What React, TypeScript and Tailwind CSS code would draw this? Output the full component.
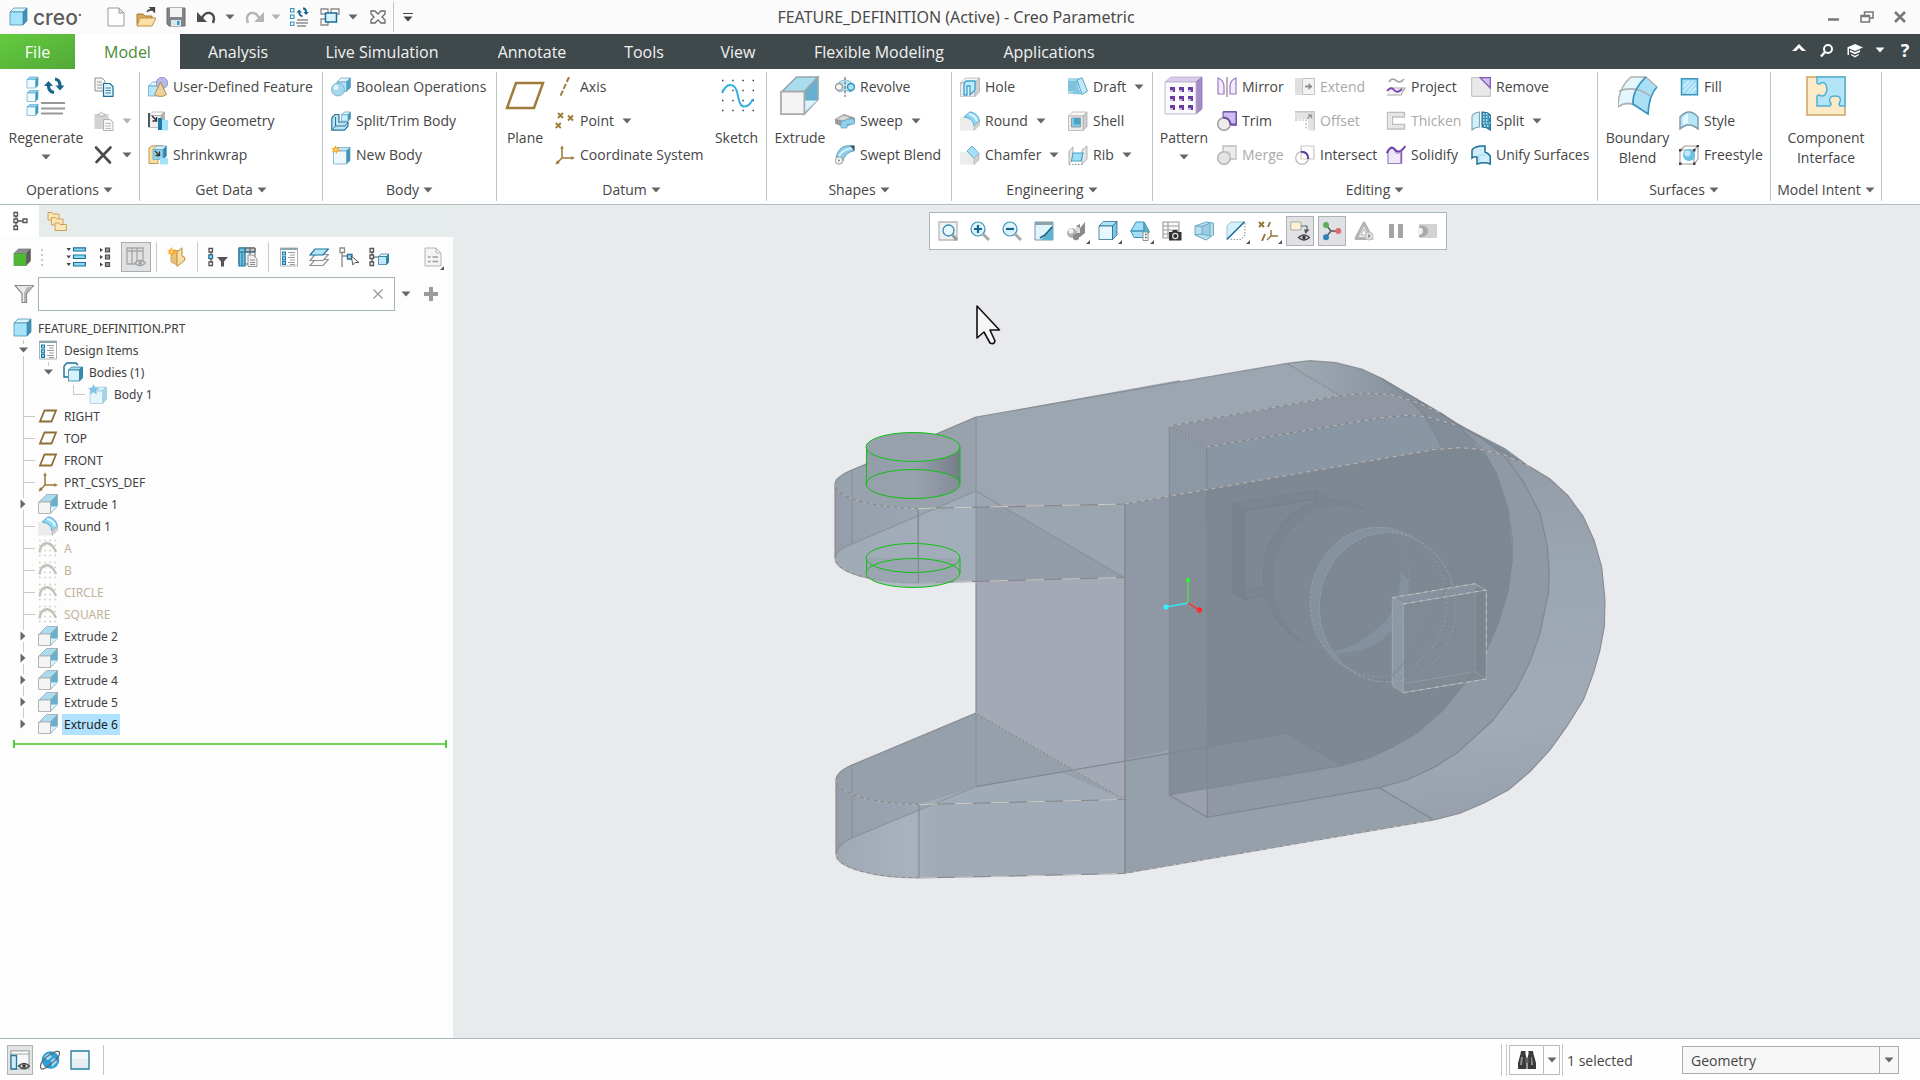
import React from 'react';
import type { ReactNode } from 'react';

/* ---------- small icons (20 x 20 grid) ---------- */

const cube = (x: number, y: number, s: number, k: number, front = '#b5e6fa', top = '#e4f6fd', side = '#4aa3c8', edge = '#5b9fbd') => (
  <g stroke={edge} strokeWidth=".7" strokeLinejoin="round">
    <path d={`M${x} ${y + k}l${k} ${-k}h${s}l${-k} ${k}z`} fill={top} />
    <path d={`M${x + s} ${y + k}l${k} ${-k}v${s}l${-k} ${k}z`} fill={side} />
    <path d={`M${x} ${y + k}h${s}v${s}h${-s}z`} fill={front} />
  </g>
);

const extrude = (
  <>
    <path d="M1 8 8.500 .5H19.500L12.500 8Z" fill="#a9dcef" stroke="#9aa7ad" strokeWidth=".8" />
    <path d="M12.500 8 19.500 .5V12L12.500 19.500Z" fill="#67b1d0" stroke="#9aa7ad" strokeWidth=".8" />
    <path d="M12.800 18.500V12.500H19Z" fill="#d9f4fc" />
    <path d="M.5 8H12.500V19.500H.5Z" fill="#f4f4f4" stroke="#aaa" strokeWidth=".9" />
  </>
);

const round = (
  <>
    <path d="M0 6H7Q13 8 14 19.500H0Z" fill="#ececec" />
    <path d="M4 6 10 .8Q18 2 19.500 10L14 15Q13 7 4 6Z" fill="#8fd8f5" stroke="#3b9cc4" strokeWidth=".8" />
    <path d="M9 3Q15 4 17 10" fill="none" stroke="#e0f7ff" strokeWidth="2" />
    <path d="M14 15 19.500 10V14L14 19.500Z" fill="#d2d2d2" stroke="#aaa" strokeWidth=".6" />
  </>
);

const loop = (
  <g fill="#17678c">
    <path d="M0 9H9L4.500 4Z" />
    <path d="M11.500 8.500H20.500L16 13.500Z" />
    <path d="M4.500 8.500C4.500 12.500 6.500 15 10 15.500" fill="none" stroke="#17678c" strokeWidth="3.200" />
    <path d="M11 2C14.500 2.500 16 5 16 9" fill="none" stroke="#17678c" strokeWidth="3.200" />
  </g>
);

const designItems = (
  <>
    <path d="M1.500 1H18.500V19H1.500Z" fill="#fff" stroke="#a8b4b8" />
    <path d="M1.500 1H18.500V3H1.500Z" fill="#8fa5ae" />
    <g fill="#9fdcf6" stroke="#1a7aa8" strokeWidth="1.100">
      <path d="M3.500 5H6.500V8H3.500ZM3.500 9.700H6.500V12.700H3.500ZM3.500 14.400H6.500V17.400H3.500Z" />
    </g>
    <path d="M9 5.500H16M11 8H16M9 10.500H16M11 13H16M9 15.500H16M11 17.500H16" stroke="#9a9a9a" />
  </>
);

const nodes = (x: number) => (
  <g fill="#fff" stroke="#555" strokeWidth="1.300">
    <path d={`M${x + 2} 5V7.500M${x + 2} 12V15`} />
    <path d={`M${x} 1.500h3.500v3.500h-3.500zM${x} 8h3.500v3.500h-3.500zM${x} 15h3.500v3.500h-3.500z`} />
  </g>
);

const spark = (
  <>
    <path d="M4.500 0 5.600 3 8.500 2 7.400 4.500 9.500 6 6.500 6.500 5.500 9 4 6.500 .8 7.500 2.300 5 0 3.500 3 3Z" fill="#f9a51f" />
    <circle cx="4.700" cy="4.700" r="1.300" fill="#ffe08a" />
  </>
);

const ICONS: Record<string, ReactNode> = {
  part: cube(1, 1, 13, 4, '#a5e3fb', '#d7f3fd', '#3f93b8', '#3c86a8'),
  newFile: (
    <>
      <path d="M2 1H13L18 6V19H2Z" fill="#fdfdfd" stroke="#9b9b9b" />
      <path d="M13 1V6H18Z" fill="#e3e3e3" stroke="#9b9b9b" />
    </>
  ),
  open: (
    <>
      <path d="M1 7H7L9 9H16V18H1Z" fill="#d7a95a" stroke="#a57b30" />
      <path d="M4 11H20L16 19H1Z" fill="#fbdfa4" stroke="#c2924a" />
      <path d="M11 5Q12 2 16 3M14 .5H18.500V5Z" stroke="#444" strokeWidth="1.300" fill="#444" />
    </>
  ),
  save: (
    <>
      <path d="M1 1H19V19H3L1 17Z" fill="#848484" stroke="#6d6d6d" />
      <path d="M4 1H16V10H4Z" fill="#f4f4f4" />
      <path d="M5 13H15V19H5Z" fill="#d9e8ee" />
      <path d="M11 14H13.500V18H11Z" fill="#2f9cc4" />
    </>
  ),
  undo: (
    <>
      <path d="M5 11Q8 5 13 6Q19 8 16 16" fill="none" stroke="#4b4b4b" strokeWidth="2.400" />
      <path d="M0 5V15H10Z" fill="#4b4b4b" />
    </>
  ),
  redo: (
    <>
      <path d="M15 11Q12 5 7 6Q1 8 4 16" fill="none" stroke="#b5b5b5" strokeWidth="2.400" />
      <path d="M20 5V15H10Z" fill="#b5b5b5" />
    </>
  ),
  regen: (
    <>
      <g fill="#e8f8fe" stroke="#3e93b5" strokeWidth="1.100">
        <path d="M1.500 1.500H5V5H1.500ZM1.500 8H5V11.500H1.500ZM1.500 15H5V18.500H1.500Z" />
      </g>
      <g transform="translate(7.500 0) scale(.6)">{loop}</g>
      <path d="M8 13H19M7 16H19M8 19H17" stroke="#8d8d8d" strokeWidth="1.400" />
    </>
  ),
  windows: (
    <>
      <path d="M1 2H8V7H1ZM11 2H19V7H11ZM1 12H8V18H1Z" fill="#fff" stroke="#8b8b8b" strokeWidth="1.300" />
      <path d="M5.500 6H16.500V15H5.500Z" fill="#d7f2fd" stroke="#1b6f94" strokeWidth="1.500" />
    </>
  ),
  closeX: <path d="M3 4H7L10 7 13 4H17V7L14 10 17 13V16H13L10 13 7 16H3V13L6 10 3 7Z" fill="none" stroke="#6a6a6a" strokeWidth="1.300" />,
  copy: (
    <>
      <path d="M1 1H8L11 4V14H1Z" fill="#f5f5f5" stroke="#8f8f8f" />
      <path d="M3 5H8M3 8H8M3 11H8" stroke="#999" />
      <path d="M9.500 6.500H16L19 9.500V19.300H9.500Z" fill="#dff5fd" stroke="#1d6f94" strokeWidth="1.200" />
      <path d="M11.500 11H17M11.500 13.500H17M11.500 16H17" stroke="#2e86ab" />
    </>
  ),
  paste: (
    <>
      <path d="M.5 3H14.500V18H.5Z" fill="#d3d3d3" />
      <path d="M4 5V3H6Q7.500 -1 9 3H11V5Z" fill="#f5f5f5" stroke="#b3b3b3" />
      <path d="M9.500 8.500H16L19 11V19.500H9.500Z" fill="#f7f7f7" stroke="#b3b3b3" />
      <path d="M11.500 12.500H17M11.500 15H17M11.500 17.500H17" stroke="#bbb" />
    </>
  ),
  del: <path d="M2 2.500 16 17.500M16.500 2.500 2.500 17" stroke="#4a4a4a" strokeWidth="2.600" strokeLinecap="round" />,
  udf: (
    <>
      {cube(0.500, 5, 10, 4)}
      <circle cx="14" cy="6" r="5.700" fill="#b9b9e8" stroke="#8585c5" strokeWidth=".8" />
      <path d="M12.500 5 18.500 17.500Q13 21.500 6.500 17.500Z" fill="#ecd29a" stroke="#a98646" strokeWidth=".9" />
    </>
  ),
  copyGeom: (
    <>
      {cube(1, 1, 12, 3.500, '#efefef', '#fafafa', '#b5b5b5', '#a1a1a1')}
      <path d="M0 2H2V16H0Z" fill="#4a5a62" />
      <path d="M4 5 8 9M8.500 6V10H4.500" stroke="#333" strokeWidth="1.400" fill="none" />
      <path d="M10 7H14V19H10Z" fill="#1b7ba6" />
      <path d="M14 9H20V19.500H14Z" fill="#a4e2fa" />
    </>
  ),
  shrink: (
    <>
      <path d="M1 3 4 .8H15V12H10V18.500H1Z" fill="#f9dfa6" stroke="#c19a50" />
      {cube(5, 1, 10, 3.500, '#8ed3ee', '#d7f2fd', '#2f86ab')}
      <path d="M7 6 11 10M11.500 6.500V10.500H7.500" stroke="#333" strokeWidth="1.300" fill="none" />
      <path d="M12 13H20V19.500H12Z" fill="#a4e2fa" />
    </>
  ),
  boolean: (
    <>
      {cube(6, 1, 9.500, 4)}
      <circle cx="7" cy="12.500" r="6.500" fill="#a8d8ee" stroke="#6aa7c4" strokeWidth=".8" />
      <circle cx="5" cy="10.500" r="2.500" fill="#dff4fc" />
    </>
  ),
  splitTrim: (
    <>
      <path d="M.8 7 4 3.500H8V11H17V15L13.500 19.200H.8Z" fill="#bfe3f2" stroke="#2a7598" strokeWidth="1.200" />
      <path d="M4.500 6V15H14L17 11.500M4.500 15 1 19" fill="none" stroke="#2a7598" />
      {cube(10.500, 1, 6.500, 2.700, '#c7effc', '#e4f6fd', '#3f93b8')}
    </>
  ),
  newBody: (
    <>
      {cube(2.500, 2.500, 13, 3.500, '#eef8fc', '#bfe9f8', '#3e93b5')}
      {spark}
    </>
  ),
  axis: <path d="M14 0 5 20" stroke="#a07c3c" strokeWidth="2" strokeDasharray="5.500 2" fill="none" />,
  point: (
    <g stroke="#a07c3c" strokeWidth="1.900" fill="none">
      <path d="M3 2 8 7M8 2 3 7M13 4.500 18 9.500M18 4.500 13 9.500M.8 12 5.800 17M5.800 12 .8 17" />
    </g>
  ),
  csys: (
    <g stroke="#9a7838" strokeWidth="1.500" fill="#9a7838">
      <path d="M7 3V13H17M7 13 2 18" fill="none" />
      <path d="M7 .8 8.500 3.500H5.500ZM19.500 13 16.500 11.500V14.500ZM.8 19.200 4.500 18 2.200 15.500Z" strokeWidth=".4" />
    </g>
  ),
  revolve: (
    <>
      <path d="M4 5Q10 1 16 5V15Q10 12 4 15Z" fill="#bfe6f6" stroke="#78b4cd" strokeWidth=".8" />
      <circle cx="4" cy="10" r="3.500" fill="#f5f5f5" stroke="#999" strokeWidth="1.300" />
      <circle cx="16" cy="10" r="3.500" fill="#a8e1f7" stroke="#2d8fb8" strokeWidth="1.300" />
      <path d="M10 0V20" stroke="#555" strokeDasharray="3 1.500" />
    </>
  ),
  sweep: (
    <>
      <path d="M.5 8 9 3.500 19.500 7V12L9.500 16 .5 12.500Z" fill="#9b9b9b" stroke="#8a8a8a" strokeWidth=".7" />
      <path d="M1 8 9 4.500 15 6.500 8 9.500Z" fill="#dadada" />
      <path d="M6 11 13 8H19.500V13L12 13.500V17H6Z" fill="#8fd0ea" stroke="#5aa9c8" strokeWidth=".7" />
    </>
  ),
  sweptBlend: (
    <>
      <path d="M1 12Q4 1 13 .7H19V6Q10 7 7.500 17Z" fill="#8ecdea" stroke="#4d9dbd" strokeWidth=".9" />
      <path d="M4 11Q8 4 18 3" stroke="#ddf4fc" strokeWidth="1.800" fill="none" />
      <path d="M15 .7H19.500V6Z" fill="#44545c" />
      <circle cx="4" cy="15.500" r="3.700" fill="#f4f4f4" stroke="#999" />
      <circle cx="4" cy="15.500" r="1" fill="#888" />
    </>
  ),
  hole: (
    <>
      {cube(0.500, 1, 14, 5, '#ececec', '#f7f7f7', '#cfcfcf', '#a9a9a9')}
      <path d="M4 18V8Q4 4 7.500 4H15V13L10 18V9H7V18Z" fill="#bdebfb" stroke="#3aa0cc" strokeWidth="1.300" />
    </>
  ),
  draft: (
    <>
      <path d="M0 1H11V17H0Z" fill="#a8d7ea" />
      <path d="M0 4H9V14H0Z" fill="#7fc1db" />
      <path d="M9 3 14 .7 19.500 14 14 17.500Z" fill="#bfe9f9" stroke="#4a9dbe" strokeWidth=".9" />
      <path d="M4 17 9 9 14 17.500Z" fill="#7fc6e2" />
    </>
  ),
  round,
  shell: (
    <>
      {cube(0.500, 1, 14.500, 4, '#ececec', '#f7f7f7', '#cdcdcd', '#a9a9a9')}
      <path d="M3.500 7H12.500V16H3.500Z" fill="#7ccbe6" stroke="#8a8a8a" strokeWidth=".8" />
      <path d="M6 7H12.500V13.500H6Z" fill="#4aa3c4" />
    </>
  ),
  chamfer: (
    <>
      <path d="M0 7H8L14 13V19.500H0Z" fill="#ececec" />
      <path d="M7 6 12 1 19 8.500 14 13.500Z" fill="#a6e0f6" stroke="#4fa5c6" strokeWidth=".9" />
      <path d="M14 13.500 19 8.500V15L14 19.500Z" fill="#d2d2d2" stroke="#aaa" strokeWidth=".6" />
    </>
  ),
  rib: (
    <>
      <path d="M1 6 5 2V15L1 18.500ZM14 5 19 1V14L14 19Z" fill="#e3e3e3" stroke="#a2a2a2" strokeWidth=".8" />
      <path d="M5 8H15L13 16H3.500Z" fill="#9fdcf4" stroke="#44a3c8" strokeWidth="1.100" />
      <path d="M1 19.500H15" stroke="#888" strokeDasharray="1.500 1.500" />
    </>
  ),
  mirror: (
    <>
      <path d="M1 1Q7 3 7 10V17H1ZM19 1Q13 3 13 10V17H19Z" fill="#f3ecfa" stroke="#9a78bf" strokeWidth="1.200" />
      <path d="M10 0V20" stroke="#777" strokeWidth="1.100" />
    </>
  ),
  trim: (
    <>
      <path d="M6 1H19V14H14" fill="none" stroke="#5d3a96" strokeWidth="1.600" />
      <path d="M6 1H19V13H14Q13 6 6 6Z" fill="#cdbdf0" stroke="#6b44a4" />
      <circle cx="7" cy="13" r="6.300" fill="#e9e9e9" fillOpacity=".8" stroke="#999" strokeWidth="1.400" />
      <path d="M6 6.700Q13 7 13.500 14" fill="none" stroke="#6b44a4" strokeWidth="1.400" />
    </>
  ),
  merge: (
    <>
      <path d="M6 1H19V14H6Z" fill="#ececec" stroke="#bdbdbd" strokeWidth="1.300" />
      <circle cx="7" cy="13" r="6.300" fill="#e4e4e4" stroke="#b4b4b4" strokeWidth="1.500" />
      <path d="M7 7H13V13" fill="none" stroke="#ccc" />
    </>
  ),
  extend: (
    <>
      <path d="M0 1H12V18H0Z" fill="#dfdfdf" />
      <path d="M7.500 1.500H19.500V17.500H7.500Z" fill="#f3f3f3" stroke="#c3c3c3" />
      <path d="M10 9.500H14" stroke="#8b8b8b" strokeWidth="1.800" />
      <path d="M13.500 6 17.500 9.500 13.500 13Z" fill="#8b8b8b" />
    </>
  ),
  offset: (
    <>
      <path d="M0 1H19V19.500H13V8H0Z" fill="#e3e3e3" />
      <path d="M0 .8H19.500V19.500" fill="none" stroke="#c6c6c6" strokeWidth="1.400" />
      <path d="M0 9H11V19" fill="none" stroke="#aaa" strokeDasharray="2 1.500" />
      <path d="M12 8 16 4M13 4H16.500V7.500" fill="none" stroke="#999" strokeWidth="1.300" />
    </>
  ),
  intersect: (
    <>
      <path d="M6 1H19V14H6Z" fill="#fbfbfb" stroke="#c9c9c9" strokeWidth="1.200" />
      <circle cx="7" cy="13" r="6.300" fill="none" stroke="#bbb" strokeWidth="1.300" />
      <path d="M6 6.700Q13 6.500 13.300 14" fill="none" stroke="#5f3a99" strokeWidth="2" />
    </>
  ),
  project: (
    <>
      <path d="M3 5Q6 0 10 3.500T18 2" fill="none" stroke="#a7a7a7" strokeWidth="1.700" />
      <path d="M4 11H19L15 18H1" fill="#f2f2f2" stroke="#a7a7a7" strokeWidth="1.200" />
      <path d="M1 14Q5 9 8 13T16 12" fill="none" stroke="#7a45b5" strokeWidth="1.900" />
    </>
  ),
  thicken: (
    <>
      <path d="M1.500 1.500H18.500V6H6.500V13.500H18.500V18H1.500Z" fill="#f3f3f3" stroke="#bdbdbd" strokeWidth="1.300" />
      <path d="M4 4H18M4 4V16H18" fill="none" stroke="#d6d6d6" />
    </>
  ),
  solidify: (
    <>
      <path d="M2 6Q7 1 9 6T15 6V18.500H2Z" fill="#efe8f7" stroke="#9c7bc4" strokeWidth="1.200" />
      <path d="M.8 8Q5 -1 9 4.500T19.300 1" fill="none" stroke="#6b3fa6" strokeWidth="2" />
      <path d="M15.500 5V18.500" stroke="#8b63b8" strokeWidth="1.500" />
    </>
  ),
  remove: (
    <>
      <path d="M.7 .7H19.300V19.300H.7Z" fill="#e9e9e9" stroke="#bbb" />
      <path d="M9 .7H19.300V11Z" fill="#cdbdf0" stroke="#8156b5" strokeWidth="1.200" />
    </>
  ),
  split: (
    <>
      <path d="M1 5Q3 1.500 8.500 1V16Q4 16 1 19Z" fill="#cfeffb" stroke="#7fa5b5" strokeWidth="1.100" />
      <path d="M11 1Q17 1 19.300 4V19Q16 16 11 16Z" fill="#3f95bb" stroke="#256d90" strokeWidth="1.100" />
      <path d="M12 3H18M12 6H19M12 9H18M12 12H19M13 15H18" stroke="#bfeafa" strokeDasharray="1.500 1.500" strokeWidth="1.400" />
    </>
  ),
  unify: (
    <>
      <path d="M1 5Q4 .5 14 1V7Q17 8 19.300 11V19Q14 16.500 6 19V12Q3 11 1 13Z" fill="#cfeefa" stroke="#1c6f95" strokeWidth="1.500" />
      <path d="M8 17V10H15" fill="none" stroke="#a5d7ea" />
    </>
  ),
  fill: (
    <>
      <path d="M2.500 1.800H18.500V17.800H2.500Z" fill="#9fdcf5" stroke="#3996bd" strokeWidth="1.500" />
      <path d="M4 15 14 4M8 16 17 6M4 10 10 4M12 16 17 11" stroke="#e0f6fe" strokeWidth="1.100" />
    </>
  ),
  style: (
    <>
      <path d="M1 6Q10 -4 19 6V18Q10 10 1 18Z" fill="#b5e6f8" stroke="#7c99a5" strokeWidth="1.400" />
      <path d="M4 7Q7 3 9 3V12Q6 12 4 14Z" fill="#e5f8fe" />
    </>
  ),
  freestyle: (
    <>
      <path d="M1 5 6 1H19V14L15 19H1ZM1 5H15V19M15 5 19 1" fill="none" stroke="#9b9b9b" strokeWidth="1.100" />
      <circle cx="10" cy="10" r="6" fill="#69bfe6" />
      <circle cx="8.500" cy="8.500" r="3" fill="#bfeafc" />
      <path d="M0 4H2.500V6.500H0ZM14 4H16.500V6.500H14ZM0 17.500H2.500V20H0ZM14 17.500H16.500V20H14ZM17.500 0H20V2H17.500Z" fill="#444" />
    </>
  ),
  extrude,
  plane: <path d="M6.500 4.500H18L13.500 15.500H2Z" fill="none" stroke="#8f6f38" strokeWidth="1.800" />,
  designItems,
  bodies: (
    <>
      <path d="M1 4 4 1H13L15 3M1 4V15H5" fill="#e7f7fd" stroke="#1b6f94" strokeWidth="1.400" />
      {cube(5.500, 5, 11, 3, '#d5f1fb', '#a2dcf2', '#2f8bb0', '#1b6f94')}
    </>
  ),
  body: (
    <>
      {cube(2, 3, 12.500, 4, '#e6f6fb', '#d2eef8', '#a5d3e4', '#9cc8d9')}
      <path d="M5.500 0 7 3.800 11 4 8 6.500 9 10.500 5.500 8.300 2 10.500 3 6.500 0 4 4 3.800Z" fill="#7fc4e2" />
    </>
  ),
  sketchHidden: (
    <>
      <path d="M1 2.500H19M1 7.500H19M1 12.500H19M1 17.500H19" stroke="#cbcbc8" strokeWidth="1.600" strokeDasharray="1.600 3.600" />
      <path d="M1.500 14.500C3 2.500 13 2 18 14" fill="none" stroke="#c3c1b6" strokeWidth="2.300" />
    </>
  ),
  treeTab: (
    <>
      {nodes(1)}
      <path d="M5 10H10M10 8H14V11.500H10Z" fill="#fff" stroke="#555" strokeWidth="1.300" />
    </>
  ),
  folders: (
    <g fill="#fbe6b8" stroke="#c59a4c" strokeWidth=".9">
      <path d="M1 1.500H5L6 3H12V9H1Z" />
      <path d="M4.500 6.500H8.500L9.500 8H16V14H4.500Z" />
      <path d="M8 12H12L13 13.500H19.500V19.500H8Z" />
    </g>
  ),
  greenCube: (
    <>
      {cube(1, 2, 12, 4.500, '#4db830', '#8e8e8e', '#5c5c5c', '#6a6a6a')}
      <path d="M1 6.500H13V18.500H1Z" fill="#4db830" />
    </>
  ),
  listOpen: (
    <>
      <g fill="#8dd7f5" stroke="#1a7297" strokeWidth="1.200">
        <path d="M7.500 .8H19.300V4H7.500ZM7.500 8H19.300V11.500H7.500ZM7.500 15.500H19.300V19H7.500Z" />
      </g>
      <path d="M.5 1H5L2.700 4ZM.5 8.500H5L2.700 11.500ZM.5 16H5L2.700 19Z" fill="#444" />
    </>
  ),
  listClosed: (
    <>
      <path d="M4 1 7 3 4 5ZM4 8 7 10 4 12ZM4 15.500 7 17.500 4 19.500Z" fill="#444" />
      <path d="M9.500 1H13.500V5H9.500ZM9.500 8H13.500V12H9.500ZM9.500 15.500H13.500V19.500H9.500Z" fill="#999" stroke="#4d4d4d" strokeWidth="1.200" />
    </>
  ),
  columns: (
    <>
      <path d="M1 1H17V17H1ZM1 4H17M6 1V17M11 1V17" fill="none" stroke="#a5a5a5" strokeWidth="1.300" />
      <path d="M9 16Q14 10.500 19.500 16Q14 21 9 16Z" fill="#e0e1e3" stroke="#a0a0a0" strokeWidth="1.300" />
      <circle cx="14.200" cy="16" r="1.800" fill="#a0a0a0" />
    </>
  ),
  packageNew: (
    <>
      <path d="M4 3.500H13V14.500L10 18 4 15Z" fill="#e8c27a" stroke="#c59a4c" strokeWidth=".8" />
      <path d="M10 5 15 .8V9Q18.500 9.500 18 13L10 19.500Z" fill="#f9dfa6" stroke="#b98c42" />
      {spark}
    </>
  ),
  treeFilter: (
    <>
      {nodes(1)}
      <path d="M1 8H4.500V11.500H1Z" fill="#8dd7f5" stroke="#1a7297" />
      <path d="M9 10H20L16 14.500V19.500H13V14.500Z" fill="#555" />
    </>
  ),
  tableDoc: (
    <>
      <path d="M1 1H17V17H1Z" fill="#f2f2f2" stroke="#666" />
      <path d="M7 1H17V5H7Z" fill="#bfbfbf" stroke="#555" />
      <path d="M1 1H7V19H1Z" fill="#6fc3e6" stroke="#1b6f94" strokeWidth="1.200" />
      <path d="M1 5H17M4 5V19M12 1V8" stroke="#2f6f8c" />
      <path d="M10 8H15L19 12V19.500H10Z" fill="#f1f1f1" stroke="#999" />
      <path d="M12 13H17M12 15.500H17M12 17.500H17" stroke="#888" />
    </>
  ),
  layers: (
    <g strokeWidth="1.200">
      <path d="M6 12.500H19.500L14 18.500H1Z" fill="#fafafa" stroke="#8f8f8f" />
      <path d="M6 7.500H19.500L14 13.500H1Z" fill="#fafafa" stroke="#8f8f8f" />
      <path d="M6 2H19.500L14 8H1Z" fill="#b2e5f8" stroke="#1f7398" />
    </g>
  ),
  treeSelect: (
    <>
      <path d="M1 1H5.500V5.500H1ZM3 5.500V20M3 9H8" fill="#fff" stroke="#8a8a8a" strokeWidth="1.300" />
      <path d="M8.500 7.500H13V12H8.500Z" fill="#a5e0f7" stroke="#1a7297" strokeWidth="1.300" />
      <path d="M12 9 14 18 16 15.500H20Z" fill="#fff" stroke="#555" />
    </>
  ),
  treeCube: (
    <>
      {nodes(1)}
      <path d="M5 10H9" stroke="#555" />
      {cube(9.500, 7, 8, 2.500, '#bfe9f8', '#e4f6fd', '#2f8bb0', '#1b6f94')}
    </>
  ),
  docOpts: (
    <>
      <path d="M2 1H13L18 6V19H2Z" fill="#f4f4f4" stroke="#b5b5b5" />
      <path d="M13 1V6H18" fill="none" stroke="#b5b5b5" />
      <path d="M5 10H7.500M9.500 10H15M5 14.500H7.500M9.500 14.500H15" stroke="#999" strokeWidth="1.500" />
    </>
  ),
  filter: (
    <>
      <path d="M1 1.500H19.500L12.500 9.500V18.500H8V9.500Z" fill="#e9e9e9" stroke="#8a8a8a" strokeWidth="1.200" />
      <path d="M13 3H18L12 9V18H10V9Z" fill="#b5b5b5" />
    </>
  ),
  zoomFit: (
    <>
      <path d="M1 1H19V19H1Z" fill="#f1f1f1" stroke="#b7b7b7" strokeWidth="1.300" />
      <circle cx="10.500" cy="9.500" r="5.500" fill="#e8f7fd" stroke="#2f8bb0" strokeWidth="1.300" />
      <path d="M14.500 14 19 19" stroke="#9b9b9b" strokeWidth="3" />
    </>
  ),
  zoomIn: (
    <>
      <circle cx="8" cy="8" r="7" fill="#ddf3fc" stroke="#3a93b8" strokeWidth="1.200" />
      <path d="M8 4V12M4 8H12" stroke="#17678c" strokeWidth="2.200" />
      <path d="M13 13 19 19" stroke="#a9a9a9" strokeWidth="3" />
    </>
  ),
  zoomOut: (
    <>
      <circle cx="8" cy="8" r="7" fill="#ddf3fc" stroke="#3a93b8" strokeWidth="1.200" />
      <path d="M4 8H12" stroke="#17678c" strokeWidth="2.200" />
      <path d="M13 13 19 19" stroke="#a9a9a9" strokeWidth="3" />
    </>
  ),
  repaint: (
    <>
      <path d="M1 1H19V19H1Z" fill="#e1f4fb" stroke="#7b99a5" />
      <path d="M1 1H19V4H1Z" fill="#8ba3ad" />
      <path d="M19 4V19H7Z" fill="#5fb2d2" />
      <path d="M18 6 11 14 6 17" stroke="#1d5f80" strokeWidth="1.600" fill="none" />
    </>
  ),
  render: (
    <>
      <path d="M10 5 14 3V7L19 1V12L14 16H10Z" fill="#8b8b8b" />
      <path d="M10 5 14 7V12H10Z" fill="#dedede" />
      <circle cx="6" cy="12" r="5" fill="#b3b3b3" />
      <circle cx="5" cy="10" r="2.500" fill="#f2f2f2" />
      <circle cx="10" cy="16" r="3.200" fill="#8c8c8c" />
    </>
  ),
  displayStyle: cube(1, 0.500, 13.500, 4.500, '#e6f7fd', '#b0e4f7', '#7cc7e4', '#0f5b80'),
  savedViews: (
    <>
      <path d="M.8 10 6 1H14V10ZM.8 10H14V16.500H4Z" fill="#a2def5" stroke="#3c93b8" />
      <path d="M14 1 19 10V12H14Z" fill="#5fb1d2" stroke="#3c93b8" />
      <path d="M13 11H18V19.500H13Z" fill="#fafafa" stroke="#8f8f8f" />
      <path d="M15 13.500H16.500M15 16.500H16.500" stroke="#555" strokeWidth="1.300" />
    </>
  ),
  viewManager: (
    <>
      <path d="M1 1H17V17H1ZM1 5H17M1 9H17M1 13H17M6 1V17" fill="#f8f8f8" stroke="#9b9b9b" strokeWidth="1.100" />
      <path d="M7 11H10L11 9H15L16 11H19.500V19.500H7Z" fill="#333" />
      <circle cx="13.300" cy="15" r="2.600" fill="#333" stroke="#ddd" strokeWidth="1.200" />
    </>
  ),
  perspective: (
    <>
      <path d="M1 5 12 1 19.500 2V14L12 19 1 14Z" fill="#b8def0" stroke="#6aaac6" />
      <path d="M8 5.500 16 2V15L8 13ZM1 14 8 13M1 5 8 5.500" fill="#8ec7e0" fillOpacity=".7" stroke="#6aaac6" />
    </>
  ),
  section: (
    <>
      <path d="M1 5 5 1H19L2 18H1Z" fill="#d3f0fb" stroke="#8bb7c9" strokeWidth=".8" />
      <path d="M19 2V14L15 18.500H4" fill="none" stroke="#9b9b9b" strokeDasharray="1.500 1.500" strokeWidth="1.200" />
      <path d="M18.500 .8 .8 18.500" stroke="#256f94" strokeWidth="1.500" />
    </>
  ),
  datumDisplay: (
    <g stroke="#94743a" strokeWidth="1.900" fill="none">
      <path d="M1 1 6 6M6 1 1 6M12 1 10 6M7 13 4 20" />
      <path d="M13 9V15H20M13 15 9 19" strokeWidth="1.400" />
    </g>
  ),
  annotation: (
    <>
      <path d="M.8 1H11V9H.8Z" fill="#fdf3d3" stroke="#a8a8a8" />
      <path d="M11 5H17V9" fill="none" stroke="#666" strokeWidth="1.200" />
      <path d="M14 8.500H19.500L15.500 13Z" fill="#555" />
      <path d="M8.500 16.500Q14 11.500 19.500 16.500Q14 21.500 8.500 16.500Z" fill="#ddd" stroke="#444" strokeWidth="1.500" />
      <circle cx="14" cy="16.500" r="1.700" fill="#333" />
    </>
  ),
  spin: (
    <>
      <path d="M4 4 9 10H16M9 10 4 16" stroke="#555" strokeWidth="1.400" fill="none" />
      <circle cx="4" cy="4" r="3" fill="#5fae58" />
      <circle cx="16.300" cy="10" r="3" fill="#e26b6b" />
      <circle cx="4" cy="16.300" r="3" fill="#2f82b5" />
    </>
  ),
  simulate: (
    <>
      <path d="M10 2 18 17.500H2Z" fill="#ededed" stroke="#b4b4b4" strokeWidth="3" strokeLinejoin="round" />
      <path d="M10 8 13 14H7Z" fill="#fff" stroke="#b4b4b4" />
      <circle cx="15" cy="15" r="4" fill="#e1e1e1" stroke="#c0c0c0" />
      <path d="M14 12.800V17.200L17 15Z" fill="#999" />
    </>
  ),
  pause: <path d="M3 3H8V17H3ZM12 3H17V17H12Z" fill="#a5a5a5" />,
  flow: (
    <>
      <path d="M1 3H19V17H1Z" fill="#d2d2d2" />
      <path d="M1 5Q10 4 10 10T1 16Z" fill="#a9a9a9" />
      <path d="M0 7Q5 6 5 10T0 14Z" fill="#f0f0f0" />
    </>
  ),
  navigator: (
    <>
      <path d="M1 1H19V19H1Z" fill="#f5f7f8" stroke="#a5a5a5" strokeWidth="1.200" />
      <path d="M1 1H19V4H1Z" fill="#fff" stroke="#a5a5a5" />
      <path d="M1 5.500H6.500V19H1Z" fill="#cfecf7" stroke="#26789c" strokeWidth="1.300" />
      <path d="M8.500 16Q14 11 19.500 16Q14 21 8.500 16Z" fill="#ddd" stroke="#444" strokeWidth="1.500" />
      <circle cx="14" cy="16" r="1.700" fill="#333" />
    </>
  ),
  globe: (
    <>
      <circle cx="10.500" cy="10" r="8.800" fill="#2d9fd6" />
      <path d="M4 7Q7 3 10 4L12 7 8 10 6 9ZM11 10 15 8 17 12 12 17Z" fill="#a8def5" />
      <path d="M1.500 19C-2 15 4 8 10 4.500S19 .5 19.500 2.500 17 9 12 13 4 20 1.500 19Z" fill="none" stroke="#666" strokeWidth="1.200" />
    </>
  ),
  square: (
    <>
      <path d="M1 1H19V19H1Z" fill="#e3eef3" stroke="#2c7fa3" strokeWidth="1.400" />
      <path d="M2 2H18V9H2Z" fill="#f3f7f9" />
    </>
  ),
  binoculars: (
    <g fill="#3a3a3a">
      <path d="M4 1H8.500V4L9.500 8V19H1V13L3.500 4Z" />
      <path d="M16 1H11.500V4L10.500 8V19H19V13L16.500 4Z" />
      <path d="M4 7 3 15H5L6 7ZM14 7V15H16L15 7Z" fill="#8f8f8f" />
      <path d="M8.500 8H11.500V13H8.500Z" fill="#666" />
    </g>
  ),
};

function Icon({ name, className = 'size-5' }: { name: string; className?: string }) {
  return (
    <svg viewBox="0 0 20 20" className={`${className} shrink-0`} aria-hidden="true">
      {ICONS[name]}
    </svg>
  );
}

function Caret({ color = '#666' }: { color?: string }) {
  return (
    <svg viewBox="0 0 10 6" className="h-1.5 w-2.5 shrink-0" aria-hidden="true">
      <path d="M.5 .5H9.500L5 5.500Z" fill={color} />
    </svg>
  );
}

/* ---------- large ribbon icons (40 x 40 grid) ---------- */

const BIG: Record<string, ReactNode> = {
  regenerate: (
    <>
      {cube(1, 1, 8.500, 2.500, '#eefaff', '#8bd6f3', '#3c93b8', '#63aecb')}
      {cube(1, 14.500, 8.500, 2.500, '#eefaff', '#8bd6f3', '#3c93b8', '#63aecb')}
      {cube(1, 28.500, 8.500, 2.500, '#eefaff', '#8bd6f3', '#3c93b8', '#63aecb')}
      <g transform="translate(18 1)">{loop}</g>
      <path d="M15 27H39M15 32.500H39M15 37.500H37" stroke="#9a9a9a" strokeWidth="2" />
    </>
  ),
  plane: <path d="M11 7H38L29 32H2Z" fill="none" stroke="#a07c3c" strokeWidth="2.500" />,
  sketch: (
    <>
      <path d="M5 4.500H37M5 14.500H37M5 24.500H37M5 34.500H37" stroke="#333" strokeWidth="1.400" strokeDasharray="1.400 8.800" />
      <path d="M5 17Q9 8 14 9Q19 9 21 20T27 30.500Q32 31 36 23" fill="none" stroke="#35aee2" strokeWidth="2" />
    </>
  ),
  extrude: <g transform="scale(1.95)">{extrude}</g>,
  pattern: (
    <>
      <path d="M1 6 7 1H38L32 6Z" fill="#d8cdec" stroke="#b7a8d2" strokeWidth=".8" />
      <path d="M32 6 38 1V33L32 38Z" fill="#a48cc6" stroke="#9078b5" strokeWidth=".8" />
      <path d="M1 6H32V38H1Z" fill="#fbfafd" stroke="#bfb6cf" />
      <g fill="#6a3ba3">
        <path d="M6 11h5v5h-5zM15 11h5v5h-5zM24 11h5v5h-5zM6 20h5v5h-5zM15 20h5v5h-5zM24 20h5v5h-5zM6 29h5v5h-5zM15 29h5v5h-5zM24 29h5v5h-5z" />
      </g>
      <g fill="#c9b9e2">
        <path d="M6 14h3v2h-3zM15 14h3v2h-3zM24 14h3v2h-3zM6 23h3v2h-3zM15 23h3v2h-3zM24 23h3v2h-3zM6 32h3v2h-3zM15 32h3v2h-3zM24 32h3v2h-3z" />
      </g>
    </>
  ),
  boundary: (
    <>
      <path d="M0 31Q0 12 13 1H27L39 11Q31 19 30 38Q14 25 0 31Z" fill="#e3f6fd" />
      <path d="M27 1 39 11Q31 19 30 38L15 29Q15 12 27 1Z" fill="#a9e0f6" />
      <path d="M0 31Q0 12 13 1H28L39 11M1 15Q18 9 32 20M0 31Q8 25 17 29" fill="none" stroke="#b1b1b1" strokeWidth="1.600" />
      <path d="M28 1Q14 14 15 29M39 11Q31 19 30 38L15 28" fill="none" stroke="#3a93bb" strokeWidth="1.700" />
    </>
  ),
  component: (
    <>
      <path d="M1 1H39V39H1Z" fill="#fdebc8" stroke="#c9a65c" strokeWidth="1.500" />
      <path d="M11 1H39V30H34Q32 28 34 26Q36 20 29 20Q22 20 24 26Q26 28 24 30H11V20Q13 18 15 20Q20 21 21 13Q20 5 15 7Q13 9 11 7Z" fill="#b2e5f8" stroke="#4fb0d6" strokeWidth="1.500" />
    </>
  ),
};

/* ---------- ribbon ---------- */

function Tool({ icon, text, caret, disabled }: { icon: string; text?: string; caret?: boolean; disabled?: boolean }) {
  return (
    <button
      type="button"
      disabled={disabled}
      aria-label={text ?? icon}
      className="flex h-[34px] items-center gap-[5px] whitespace-nowrap text-left disabled:text-[#a9a9a9]"
    >
      <Icon name={icon} />
      {text && <span>{text}</span>}
      {caret && (
        <span className="ml-[3px]">
          <Caret color={icon === 'paste' ? '#b5b5b5' : '#666'} />
        </span>
      )}
    </button>
  );
}

function BigTool({ icon, lines, caret, className }: { icon: string; lines: string[]; caret?: boolean; className: string }) {
  return (
    <button type="button" className={`flex flex-col items-center justify-start whitespace-nowrap pt-1.5 ${className}`}>
      <svg viewBox="0 0 40 40" className="size-10" aria-hidden="true">
        {BIG[icon]}
      </svg>
      <span className="mt-3 flex flex-col leading-5">
        {lines.map((l) => (
          <span key={l}>{l}</span>
        ))}
      </span>
      {caret && (
        <span className="mt-1.5">
          <Caret />
        </span>
      )}
    </button>
  );
}

function Group({ label, className, children }: { label: string; className: string; children: ReactNode }) {
  return (
    <>
      <section aria-label={label} className={`flex shrink-0 flex-col pt-px ${className}`}>
        <div className="flex h-[102px]">{children}</div>
        <button type="button" className="flex h-8 items-center justify-center gap-1 whitespace-nowrap pt-1">
          {label}
          <Caret />
        </button>
      </section>
      <div className="my-[3px] w-px shrink-0 bg-[#bcc4c5]" />
    </>
  );
}

const TABS: { name: string; className: string }[] = [
  { name: 'Analysis', className: 'w-[116px]' },
  { name: 'Live Simulation', className: 'w-[172px]' },
  { name: 'Annotate', className: 'w-32' },
  { name: 'Tools', className: 'w-24' },
  { name: 'View', className: 'w-[92px]' },
  { name: 'Flexible Modeling', className: 'w-[190px]' },
  { name: 'Applications', className: 'w-[150px]' },
];

function TitleBar() {
  return (
    <header className="flex h-[34px] items-center bg-[#fbfbfb] text-base">
      <div className="flex flex-1 items-center">
        <div className="flex w-[101px] items-center gap-1 pl-[9px]">
          <Icon name="part" />
          <span className="pb-0.5 font-['Inter'] text-[21px] leading-6 font-medium text-[#5c5c5c]">
            creo<span className="align-super text-[7px]">•</span>
          </span>
        </div>
        {[
          ['newFile', 'w-[30px]'],
          ['open', 'w-[30px]'],
          ['save', 'w-[30px]'],
          ['undo', 'w-8'],
          ['v', 'w-3.5'],
          ['redo', 'w-[34px]'],
          ['v-off', 'w-2.5'],
          ['regen', 'w-9'],
          ['windows', 'w-[26px]'],
          ['v', 'w-5'],
          ['closeX', 'w-[30px]'],
        ].map(([name, w], i) => (
          <button key={i} type="button" aria-label={name} className={`flex shrink-0 items-center justify-center ${w}`}>
            {name.startsWith('v') ? <Caret color={name === 'v' ? '#666' : '#b5b5b5'} /> : <Icon name={name} />}
          </button>
        ))}
        <div className="h-[30px] w-px bg-[#c5c5c5]" />
        <button type="button" aria-label="Customize toolbar" className="flex w-7 flex-col items-center gap-0.5">
          <span className="h-px w-2.5 bg-[#444]" />
          <Caret color="#444" />
        </button>
      </div>
      <h1 className="whitespace-nowrap px-4 font-['Noto_Sans',sans-serif] text-[#4a4a4a]">
        FEATURE_DEFINITION (Active) - Creo Parametric
      </h1>
      <div className="flex flex-1 items-center justify-end gap-[9px] pr-2 text-[#777]">
        <button type="button" aria-label="Minimize" className="flex size-6 items-center justify-center">
          <svg viewBox="0 0 14 14" className="size-3.5"><path d="M1 9.500H12" stroke="currentColor" strokeWidth="2.500" /></svg>
        </button>
        <button type="button" aria-label="Restore" className="flex size-6 items-center justify-center">
          <svg viewBox="0 0 14 14" className="size-3.5"><path d="M4.500 5V2H13V8H10M1 5.500H9.500V12H1ZM1 6.500H9.500" fill="none" stroke="currentColor" strokeWidth="1.500" /></svg>
        </button>
        <button type="button" aria-label="Close" className="flex size-6 items-center justify-center">
          <svg viewBox="0 0 14 14" className="size-3.5"><path d="M2 2 12 12M12 2 2 12" stroke="currentColor" strokeWidth="2.500" /></svg>
        </button>
      </div>
    </header>
  );
}

function TabBar() {
  return (
    <nav className="flex h-[35px] items-stretch bg-[#3f484a] text-base text-[#f2f2f2]">
      <button type="button" className="w-[75px] bg-linear-to-br from-[#63cc3f] to-[#53a838] text-white">File</button>
      <button type="button" className="w-[105px] bg-white text-[#4b8b35]">Model</button>
      {TABS.map((t) => (
        <button key={t.name} type="button" className={`whitespace-nowrap ${t.className}`}>
          {t.name}
        </button>
      ))}
      <div className="ml-auto flex items-center gap-3 pr-[7px] pb-1 text-white">
        <button type="button" aria-label="Collapse ribbon">
          <svg viewBox="0 0 16 16" className="size-4"><path d="M1 9 8 2 15 9H11L8 6 5 9Z" fill="currentColor" /></svg>
        </button>
        <button type="button" aria-label="Search">
          <svg viewBox="0 0 16 16" className="size-4"><circle cx="9" cy="7" r="4" fill="none" stroke="currentColor" strokeWidth="2" /><path d="M6 10 2 14.500" stroke="currentColor" strokeWidth="2.500" /></svg>
        </button>
        <button type="button" aria-label="Learning">
          <svg viewBox="0 0 16 16" className="size-4"><path d="M8 2 16 5.500 8 9 0 5.500ZM3 8 8 10.300 13 8V10L8 12.300 3 10ZM4 12 8 13.800 12 12V13L8 15.500 4 13ZM.5 6H2V13H.5Z" fill="currentColor" /></svg>
        </button>
        <button type="button" aria-label="Learning options"><Caret color="#fff" /></button>
        <button type="button" aria-label="Help" className="w-4 text-lg font-bold leading-5">?</button>
      </div>
    </nav>
  );
}

function Ribbon() {
  return (
    <div className="flex h-[136px] overflow-hidden border-b border-[#aebdbd] bg-white">
      <Group label="Operations" className="w-[139px]">
        <BigTool icon="regenerate" lines={['Regenerate']} caret className="w-[92px]" />
        <div className="ml-0.5">
          <Tool icon="copy" />
          <Tool icon="paste" caret disabled />
          <Tool icon="del" caret />
        </div>
      </Group>
      <Group label="Get Data" className="w-[182px]">
        <div className="ml-2">
          <Tool icon="udf" text="User-Defined Feature" />
          <Tool icon="copyGeom" text="Copy Geometry" />
          <Tool icon="shrink" text="Shrinkwrap" />
        </div>
      </Group>
      <Group label="Body" className="w-[173px]">
        <div className="ml-2">
          <Tool icon="boolean" text="Boolean Operations" />
          <Tool icon="splitTrim" text="Split/Trim Body" />
          <Tool icon="newBody" text="New Body" />
        </div>
      </Group>
      <Group label="Datum" className="w-[269px]">
        <BigTool icon="plane" lines={['Plane']} className="w-14" />
        <div className="ml-0.5 w-[152px]">
          <Tool icon="axis" text="Axis" />
          <Tool icon="point" text="Point" caret />
          <Tool icon="csys" text="Coordinate System" />
        </div>
        <BigTool icon="sketch" lines={['Sketch']} className="flex-1" />
      </Group>
      <Group label="Shapes" className="w-[184px]">
        <BigTool icon="extrude" lines={['Extrude']} className="w-[66px]" />
        <div className="ml-0.5">
          <Tool icon="revolve" text="Revolve" />
          <Tool icon="sweep" text="Sweep" caret />
          <Tool icon="sweptBlend" text="Swept Blend" />
        </div>
      </Group>
      <Group label="Engineering" className="w-[200px]">
        <div className="ml-2 w-[108px]">
          <Tool icon="hole" text="Hole" />
          <Tool icon="round" text="Round" caret />
          <Tool icon="chamfer" text="Chamfer" caret />
        </div>
        <div>
          <Tool icon="draft" text="Draft" caret />
          <Tool icon="shell" text="Shell" />
          <Tool icon="rib" text="Rib" caret />
        </div>
      </Group>
      <Group label="Editing" className="w-[444px]">
        <BigTool icon="pattern" lines={['Pattern']} caret className="w-[62px]" />
        <div className="ml-0.5 w-[78px]">
          <Tool icon="mirror" text="Mirror" />
          <Tool icon="trim" text="Trim" />
          <Tool icon="merge" text="Merge" disabled />
        </div>
        <div className="w-[91px]">
          <Tool icon="extend" text="Extend" disabled />
          <Tool icon="offset" text="Offset" disabled />
          <Tool icon="intersect" text="Intersect" />
        </div>
        <div className="w-[85px]">
          <Tool icon="project" text="Project" />
          <Tool icon="thicken" text="Thicken" disabled />
          <Tool icon="solidify" text="Solidify" />
        </div>
        <div>
          <Tool icon="remove" text="Remove" />
          <Tool icon="split" text="Split" caret />
          <Tool icon="unify" text="Unify Surfaces" />
        </div>
      </Group>
      <Group label="Surfaces" className="w-[172px]">
        <BigTool icon="boundary" lines={['Boundary', 'Blend']} className="w-[79px]" />
        <div className="ml-0.5">
          <Tool icon="fill" text="Fill" />
          <Tool icon="style" text="Style" />
          <Tool icon="freestyle" text="Freestyle" />
        </div>
      </Group>
      <Group label="Model Intent" className="w-[110px]">
        <BigTool icon="component" lines={['Component', 'Interface']} className="w-full" />
      </Group>
    </div>
  );
}

/* ---------- model tree ---------- */

type Guide = 'open' | 'closed' | 'last' | 'leaf' | 'elbow' | 'nested' | 'none';

interface TreeItem {
  text: string;
  icon: string;
  depth: 0 | 1 | 2;
  guide: Guide;
  muted?: boolean;
  selected?: boolean;
}

const TREE: TreeItem[] = [
  { text: 'Design Items', icon: 'designItems', depth: 0, guide: 'open' },
  { text: 'Bodies (1)', icon: 'bodies', depth: 1, guide: 'nested' },
  { text: 'Body 1', icon: 'body', depth: 2, guide: 'elbow' },
  { text: 'RIGHT', icon: 'plane', depth: 0, guide: 'leaf' },
  { text: 'TOP', icon: 'plane', depth: 0, guide: 'leaf' },
  { text: 'FRONT', icon: 'plane', depth: 0, guide: 'leaf' },
  { text: 'PRT_CSYS_DEF', icon: 'csys', depth: 0, guide: 'leaf' },
  { text: 'Extrude 1', icon: 'extrude', depth: 0, guide: 'closed' },
  { text: 'Round 1', icon: 'round', depth: 0, guide: 'leaf' },
  { text: 'A', icon: 'sketchHidden', depth: 0, guide: 'leaf', muted: true },
  { text: 'B', icon: 'sketchHidden', depth: 0, guide: 'leaf', muted: true },
  { text: 'CIRCLE', icon: 'sketchHidden', depth: 0, guide: 'leaf', muted: true },
  { text: 'SQUARE', icon: 'sketchHidden', depth: 0, guide: 'leaf', muted: true },
  { text: 'Extrude 2', icon: 'extrude', depth: 0, guide: 'closed' },
  { text: 'Extrude 3', icon: 'extrude', depth: 0, guide: 'closed' },
  { text: 'Extrude 4', icon: 'extrude', depth: 0, guide: 'closed' },
  { text: 'Extrude 5', icon: 'extrude', depth: 0, guide: 'closed' },
  { text: 'Extrude 6', icon: 'extrude', depth: 0, guide: 'last', selected: true },
];

const GUIDES: Record<Guide, ReactNode> = {
  none: <path d="M12.500 0V22" />,
  open: (
    <>
      <path d="M12.500 1V5M12.500 17V22" />
      <path d="M8 8.500H17L12.500 13.500Z" fill="#666" stroke="none" />
    </>
  ),
  nested: (
    <>
      <path d="M12.500 1V5" />
      <path d="M8 8.500H17L12.500 13.500Z" fill="#666" stroke="none" />
    </>
  ),
  elbow: <path d="M12.500 2V11.500H24" />,
  leaf: <path d="M12.500 0V22M12.500 11.500H24" />,
  closed: (
    <>
      <path d="M12.500 0V5M12.500 17V22" />
      <path d="M9.500 6.500V15.500L14.500 11Z" fill="#666" stroke="none" />
    </>
  ),
  last: (
    <>
      <path d="M12.500 0V5" />
      <path d="M9.500 6.500V15.500L14.500 11Z" fill="#666" stroke="none" />
    </>
  ),
};

function GuideCell({ kind }: { kind: Guide }) {
  return (
    <svg viewBox="0 0 25 22" className="h-[22px] w-[25px] shrink-0" fill="none" stroke="#c9c9c9" aria-hidden="true">
      {GUIDES[kind]}
    </svg>
  );
}

function TreeRow({ item }: { item: TreeItem }) {
  return (
    <li className="flex h-[22px] items-center pl-[11px]">
      {item.depth > 0 && <GuideCell kind="none" />}
      {item.depth > 1 && <span className="w-[25px]" />}
      <GuideCell kind={item.guide} />
      <span className="ml-0.5">
        <Icon name={item.icon} />
      </span>
      <button
        type="button"
        className={`ml-1 h-[21px] whitespace-nowrap px-0.5 ${
          item.selected ? 'bg-[#aee2ff] text-[#222]' : item.muted ? 'text-[#c0b39b]' : ''
        }`}
      >
        {item.text}
      </button>
    </li>
  );
}

function PanelButton({ icon, className = 'w-[30px]' }: { icon: string; className?: string }) {
  return (
    <button type="button" aria-label={icon} className={`flex h-[30px] shrink-0 items-center justify-center ${className}`}>
      <Icon name={icon} />
    </button>
  );
}

function ModelTree() {
  const sep = <span className="h-[30px] w-px bg-[#c9c9c9]" />;
  return (
    <aside className="flex w-[453px] shrink-0 flex-col bg-[#fdfdfd]">
      <div className="flex h-8 items-center bg-[#e6ebec]">
        <button type="button" aria-label="Model tree" className="flex h-8 w-[39px] items-center justify-center bg-white pl-1.5">
          <Icon name="treeTab" />
        </button>
        <button type="button" aria-label="Folder browser" className="flex h-8 w-9 items-center justify-center">
          <Icon name="folders" />
        </button>
      </div>
      <div className="mt-[5px] flex h-[30px] items-center pr-[5px] pl-2">
        <PanelButton icon="greenCube" />
        <span className="flex w-2 flex-col items-center gap-[3px]">
          {[0, 1, 2, 3].map((i) => (
            <i key={i} className="size-0.5 rounded-full bg-[#b5b5b5]" />
          ))}
        </span>
        <PanelButton icon="listOpen" className="ml-[15px] w-[30px]" />
        <PanelButton icon="listClosed" />
        <PanelButton icon="columns" className="mr-[5px] w-[30px] border border-[#aaaeb0] bg-[#e0e1e3]" />
        {sep}
        <PanelButton icon="packageNew" className="w-10" />
        {sep}
        <PanelButton icon="treeFilter" className="ml-[5px] w-[30px]" />
        <PanelButton icon="tableDoc" className="mr-[5px] w-[30px]" />
        {sep}
        <PanelButton icon="designItems" className="ml-[5px] w-[30px]" />
        <PanelButton icon="layers" />
        <PanelButton icon="treeSelect" />
        <PanelButton icon="treeCube" />
        <span className="relative ml-auto">
          <PanelButton icon="docOpts" />
          <svg viewBox="0 0 4 4" className="absolute right-1 bottom-0.5 size-1">
            <path d="M4 0V4H0Z" fill="#555" />
          </svg>
        </span>
      </div>
      <div className="mt-[5px] flex h-[34px] items-center pl-3.5">
        <Icon name="filter" />
        <div className="ml-1 flex h-[34px] w-[357px] items-center border border-[#a3b5b3] bg-white">
          <input type="text" aria-label="Search tree" className="h-full min-w-0 flex-1 px-2 outline-none" />
          <button type="button" aria-label="Clear search" className="flex w-[22px] justify-start">
            <svg viewBox="0 0 12 12" className="size-3"><path d="M1.500 1.500 10.500 10.500M10.500 1.500 1.500 10.500" stroke="#999" strokeWidth="1.300" /></svg>
          </button>
        </div>
        <button type="button" aria-label="Search options" className="flex w-[21px] justify-center"><Caret /></button>
        <button type="button" aria-label="Add filter" className="ml-2">
          <svg viewBox="0 0 14 14" className="size-3.5"><path d="M7 0V14M0 7H14" stroke="#9b9b9b" strokeWidth="4" /></svg>
        </button>
      </div>
      <ul className="mt-1.5 font-['Noto_Sans',sans-serif] text-xs leading-[21px] text-[#404040]">
        <li className="flex h-[22px] items-center pl-[13px]">
          <Icon name="part" />
          <button type="button" className="ml-[5px] whitespace-nowrap">FEATURE_DEFINITION.PRT</button>
        </li>
        {TREE.map((t) => (
          <TreeRow key={t.text} item={t} />
        ))}
      </ul>
      <div className="mt-[5px] mr-1.5 ml-[13px] flex h-2 items-center border-x-2 border-[#55c73a]">
        <span className="h-0.5 w-full bg-[#6fd457]" />
      </div>
    </aside>
  );
}

/* ---------- graphics area ---------- */

const BACK_ARC =
  'L380 70L450 62L530 68L605 87L665 115L740 172L790 222L835 300L870 400L887 490L890 540L885 630L865 720L830 820L775 920L700 1005L560 1100L455 1158L380 1180';
const SLOT_BACK =
  'M28 258L540 167L620 160L690 163L760 183L840 218L900 262L965 325L1010 400L1045 510L1057 600L1057 660L1045 750L1015 850L980 930L925 1015L850 1110L770 1180L700 1220L630 1253L545 1277L28 1365Z';
const SLOT_FRONT =
  'M140 321L660 234L740 226L800 230L890 255L960 290L1035 350L1090 425L1140 520L1162 620L1168 700L1165 760L1140 880L1110 965L1070 1045L1000 1140L890 1240L820 1283L740 1320L658 1343L142 1432Z';
const FRONT =
  'M-105 492L820 329L900 323L960 328L1035 345L1110 380L1170 417L1225 468L1270 530L1302 600L1325 680L1335 780L1333 860L1320 930L1300 1000L1270 1080L1220 1160L1170 1230L1110 1295L1045 1350L970 1390L900 1420L822 1440L-105 1600Z';
const UPPER_TOP = 'M976 417 852 470Q835 477 835 484C835 498 875 508 918 508.500L1125 504';
const UPPER_LOW = 'M835 558C835 573 875 583 918 583L1124 577.500';
const LOWER_TOP = 'M976 713 852 765Q836 772 836 780C836 794 875 804 919 804.500L1124 799.500';
const LOWER_LOW = 'M836 854C836 868 875 878 919 878L1125 873.500';

function Model() {
  return (
    <svg viewBox="460 205 1460 833" className="absolute inset-0 size-full" role="img" aria-label="Transparent clevis model">
      <defs>
        <linearGradient id="armSide" x1="0" x2="1">
          <stop offset="0" stopColor="#959daa" />
          <stop offset=".22" stopColor="#9aa4b0" />
          <stop offset=".5" stopColor="#a2adb8" />
          <stop offset="1" stopColor="#a0a9b5" />
        </linearGradient>
        <linearGradient id="armFoot" x1="0" x2="1">
          <stop offset="0" stopColor="#9fa9b4" />
          <stop offset=".25" stopColor="#a9b3bf" />
          <stop offset=".34" stopColor="#a1abb7" />
          <stop offset="1" stopColor="#a1abb7" />
        </linearGradient>
        <linearGradient id="rim" x1="0" y1="0" x2=".15" y2="1">
          <stop offset="0" stopColor="#818b97" />
          <stop offset=".12" stopColor="#9299a5" />
          <stop offset=".4" stopColor="#9aa6b1" />
          <stop offset=".75" stopColor="#a0abb7" />
          <stop offset="1" stopColor="#969daa" />
        </linearGradient>
        <linearGradient id="bore" x1="0" x2="1">
          <stop offset="0" stopColor="#939ea9" />
          <stop offset=".5" stopColor="#98a1ae" />
          <stop offset="1" stopColor="#757d88" />
        </linearGradient>
        <linearGradient id="backRim" x1="0" x2="1">
          <stop offset="0" stopColor="#a0abb5" />
          <stop offset="1" stopColor="#7f8994" />
        </linearGradient>
        <clipPath id="slotFrontClip"><path d={SLOT_FRONT} /></clipPath>
        <clipPath id="slotBackClip"><path d={SLOT_BACK} /></clipPath>
        <clipPath id="frontClip"><path d={FRONT} /></clipPath>
      </defs>

      {/* arms */}
      <path d={`${UPPER_TOP}V577.500L918 583C875 583 835 573 835 558V484Q835 477 852 470Z`} fill="url(#armSide)" />
      <path d={`${UPPER_TOP}Z`} fill="#98a2ad" />
      <path d="M976 491 852 544Q835 551 835 558C835 573 875 583 918 583L976 581Z" fill="#a3afbb" fillOpacity=".75" />
      <path d="M976 417 1125 504V800L976 713Z" fill="#a3a9b5" />
      <path d="M976 417 1180 380V498L1125 504H976Z" fill="#9ca6b0" />
      <path d="M976 508V491L1124 577.500 976 581Z" fill="#929da9" />
      <path d="M976 491V507L1125 504V577.500Z" fill="#9aa5af" />
      <path d="M976 582 1125 577.500V800L976 713Z" fill="#a3a9b5" />
      <path d={`${LOWER_TOP}V873.500L919 878C875 878 836 868 836 854V780Q836 772 852 765Z`} fill="url(#armSide)" />
      <path d={`${LOWER_TOP}Z`} fill="#96a0ab" />
      <path d="M976 786.500 852 838Q836 846 836 854C836 868 875 878 919 878L1125 873.500V799.500L1060 772Z" fill="url(#armFoot)" />
      <path d="M919 804.500 1124 799.500 976 786.500Z" fill="#a0abb8" />
      <path d="M976 786.500V713L1074 771Z" fill="#96a0ab" />

      {/* body */}
      <g transform="translate(1160 340) scale(.33333)">
        <path d="M-105 492L-552 492V231L380 70L450 62L530 68L605 87L665 115L850 222L890 250L1035 325L1110 380L820 600L-105 600Z" fill="#9ca6b0" />
        <path d="M380 70L450 62L530 68L605 87L665 115L850 222L740 226L540 167Z" fill="url(#backRim)" />
        <path d="M740 172 850 222 890 250 1035 325 1110 380 820 329 800 230Z" fill="#84909b" />
        <path d={FRONT} fill="url(#rim)" />
        <path d="M-105 492L28 469V1232L-105 1258Z" fill="#9198a5" />
        <path d="M-105 1258L140 1215V1432L658 1343L822 1440L-105 1600Z" fill="#95a0ab" />
        <path d={SLOT_BACK} fill="#9097a3" />
        <path d={SLOT_FRONT} fill="#9098a3" />
        <g clipPath="url(#slotBackClip)">
          <path d={SLOT_FRONT} fill="#8996a3" />
          <path d="M28 258 140 321V1432L28 1365Z" fill="#8c98a4" />
          <g clipPath="url(#frontClip)">
            <path d="M28 258 140 321V1432L28 1365Z" fill="#838d98" />
            <path d={SLOT_FRONT} fill="#7e8892" />
          </g>
          <path d="M665 115 740 172 790 222 835 300 870 400 890 540 885 630 865 720 775 920 1060 900 1060 500 900 240Z" fill="#7b8691" fillOpacity=".55" />
          <path d="M28 1236 380 1180 545 1277 28 1365Z" fill="#838d99" />
        </g>
        <path d="M28 1365 142 1345V1432Z" fill="#9aa1ac" />
        <g clipPath="url(#slotFrontClip)">
          <path d="M1035 350L900 262 965 325 1010 400 1045 510 1057 640 1168 700V500Z" fill="#8f98a3" />
        </g>

        {/* pads and bosses */}
        <g stroke="#757f8a" strokeWidth="2">
          <path d="M220 490 466 450 500 468V742L254 778 220 760Z" fill="#7b858f" />
          <path d="M220 490 254 513V778L220 760Z" fill="#77828c" />
          <path d="M254 513 466 478V718L254 752Z" fill="#7e8892" />
          <path d="M254 513 500 468M466 450V718L500 742" fill="none" />
          <ellipse cx="515" cy="704" rx="205" ry="225" fill="#798490" />
          <ellipse cx="543" cy="720" rx="205" ry="225" fill="#7d8892" />
        </g>
        <g fill="none">
          <ellipse cx="655" cy="786" rx="205" ry="224" fill="#84919e" stroke="#8a939c" strokeWidth="2.500" />
          <ellipse cx="683" cy="802" rx="205" ry="224" fill="#7d8892" stroke="#8a939c" strokeWidth="2.500" />
          <path d="M748 720Q740 860 640 915Q580 945 505 940 600 920 680 840 722 780 722 700Z" fill="#84919e" />
          <path d="M697 1005Q830 880 865 740M560 1100 700 1005" stroke="#75808b" strokeWidth="2.500" />
        </g>
        <path d="M697 773 945 731 979 750V1017L730 1058 697 1037Z" fill="#7f8a94" />
        <path d="M697 773 730 792V1058L697 1037Z" fill="#8c99a6" />
        <path d="M697 773 945 731 979 750 730 792Z" fill="#87929e" />
        <path d="M945 740 979 750V1017L945 995Z" fill="#7b8691" />
        <path d="M697 773 945 731 979 750V1017L730 1058 697 1037ZL730 792V1058M730 792 979 750" fill="none" stroke="#a3a7ab" strokeWidth="3" />
        <path d="M945 731V995L979 1017M697 1037 945 995" fill="none" stroke="#969ba1" strokeWidth="2.500" />

        {/* edges */}
        <g fill="none" stroke="#7f858c" strokeWidth="3.300" strokeLinejoin="round">
          <path d={`M-552 231${BACK_ARC}`} strokeOpacity=".75" />
          <path d={SLOT_BACK} strokeOpacity=".8" />
          <path d={SLOT_FRONT} />
          <path d={FRONT} stroke="#8a8a8e" />
          <path d="M28 258 140 321M28 1365 142 1432M380 70 540 167M380 1180 545 1277M660 234 820 329M658 1343 822 1440" />
          <path d="M665 115 890 250 1080 365M380 1180-552 1340" />
        </g>
        <g fill="none" stroke="#d8d6d2" strokeOpacity=".75" strokeWidth="2.500" strokeDasharray="12 12">
          <path d="M-105 492L820 329L900 323L960 328L1035 345L1110 380" />
          <path d="M28 258L540 167L620 160L690 163L760 183L840 218" />
          <path d="M140 321L660 234L740 226L800 230L890 255" />
          <path d="M28 258 140 321M380 70 540 167M660 234 820 329" strokeDasharray="4 6" />
          <path d="M-105 1600L822 1440" />
          <path d="M697 773 945 731M730 792 979 750V950M730 1058 979 1017" />
        </g>
        <g fill="none" stroke="#b4b6b8" strokeOpacity=".6" strokeWidth="2.500" strokeDasharray="5 9">
          <ellipse cx="655" cy="786" rx="205" ry="224" />
          <ellipse cx="683" cy="802" rx="205" ry="224" />
          <ellipse cx="543" cy="720" rx="205" ry="225" strokeOpacity=".3" />
        </g>
      </g>

      {/* arm edges */}
      <g fill="none" stroke="#87888c" strokeWidth="1.100">
        <path d={UPPER_TOP} />
        <path d={UPPER_LOW} />
        <path d={LOWER_TOP} />
        <path d={LOWER_LOW} />
        <path d="M835 484V558M836 780V854M918 508V583M919 804V878M1125 504V873M976 582V713M976 713 1124 799.500" />
        <path d="M852 470V544M852 765V838M976 417V582M976 713V786M835 558Q836 550 852 544L976 491 1124 577.500M836 854Q838 844 852 838L976 786.500" strokeOpacity=".7" />
      </g>
      <g fill="none" stroke="#dcdad6" strokeOpacity=".85">
        <path d="M918 508.500 1125 504M918 583 1124 577.500M919 804.500 1124 799.500M919 878 1125 873.500" strokeDasharray="18 18" />
        <path d="M835 484C835 498 875 508 918 508.500M835 558C835 573 875 583 918 583M836 780C836 794 875 804 919 804.500M836 854C836 868 875 878 919 878" strokeOpacity=".6" strokeDasharray="3 4" />
        <path d="M976 713 1124 799.500" strokeOpacity=".6" strokeDasharray="2 2" />
      </g>

      {/* selected cut */}
      <path d="M866 447V484A47 14.500 0 0 0 960 484V447Z" fill="url(#bore)" />
      <ellipse cx="913" cy="447" rx="47" ry="14.500" fill="#96a1ac" />
      <ellipse cx="913" cy="484" rx="47" ry="14.500" fill="#9aa3b0" fillOpacity=".4" />
      <path d="M866 558V573A47 14.500 0 0 0 960 573V558Z" fill="#98a3af" fillOpacity=".7" />
      <g fill="none" stroke="#0fc20f">
        <ellipse cx="913" cy="447" rx="47" ry="14.500" />
        <ellipse cx="913" cy="484" rx="47" ry="14.500" />
        <ellipse cx="913" cy="558" rx="47" ry="14.500" />
        <ellipse cx="913" cy="573" rx="47" ry="14.500" />
        <path d="M866.500 447V484M960 447V484M866.500 558V573M960 558V573" />
      </g>
      <path d="M918.500 513V583" stroke="#87888c" />

      {/* orientation centre */}
      <g strokeWidth="1.500">
        <path d="M1188 603V580" stroke="#5ad65a" />
        <path d="M1188 603 1166 607" stroke="#3be6f0" />
        <path d="M1188 603 1199 610" stroke="#f04040" />
      </g>
      <circle cx="1188" cy="580" r="2.300" fill="#35ee35" />
      <circle cx="1166" cy="607" r="2.500" fill="#2ff4fc" />
      <circle cx="1199.500" cy="610" r="2.700" fill="#ff2c2c" />

      {/* pointer */}
      <path
        d="M977 306V338L984 332 990 343Q994 345 995 341L990 330H999.500Z"
        fill="#f6f6f6"
        stroke="#111"
        strokeWidth="1.600"
        strokeLinejoin="round"
      />
    </svg>
  );
}

const VIEW_TOOLS: { icon: string; on?: boolean; more?: boolean }[] = [
  { icon: 'zoomFit' },
  { icon: 'zoomIn' },
  { icon: 'zoomOut' },
  { icon: 'repaint' },
  { icon: 'render', more: true },
  { icon: 'displayStyle', more: true },
  { icon: 'savedViews', more: true },
  { icon: 'viewManager' },
  { icon: 'perspective' },
  { icon: 'section', more: true },
  { icon: 'datumDisplay', more: true },
  { icon: 'annotation', on: true },
  { icon: 'spin', on: true },
  { icon: 'simulate' },
  { icon: 'pause' },
  { icon: 'flow' },
];

function Viewport() {
  return (
    <main className="relative flex min-w-0 flex-1 justify-center bg-[#e8eaee]">
      <Model />
      <div className="relative mt-[7px] mr-1 flex h-[38px] items-center self-start border border-[#a9b9bb] bg-white px-0.5">
        {VIEW_TOOLS.map((t) => (
          <button
            key={t.icon}
            type="button"
            aria-label={t.icon}
            className={`relative mx-0.5 flex h-[30px] w-7 items-center justify-center ${
              t.on ? 'border border-[#aeb2b4] bg-[#dfe1e4]' : ''
            }`}
          >
            <Icon name={t.icon} />
            {t.more && (
              <svg viewBox="0 0 4 4" className="absolute right-0 bottom-0.5 size-1">
                <path d="M4 0V4H0Z" fill="#555" />
              </svg>
            )}
          </button>
        ))}
      </div>
    </main>
  );
}

function StatusBar() {
  return (
    <footer className="flex h-[42px] items-center border-t border-[#a9b9bd] bg-[#fefefe] pl-[7px]">
      <button type="button" aria-label="Show navigator" className="flex h-[30px] w-[26px] items-center justify-center border border-[#aeb2b4] bg-[#e3e4e6]">
        <Icon name="navigator" />
      </button>
      <button type="button" aria-label="Show browser" className="ml-[7px]"><Icon name="globe" /></button>
      <button type="button" aria-label="Full screen" className="ml-2.5"><Icon name="square" /></button>
      <span className="ml-[13px] h-[30px] w-px bg-[#c5c5c5]" />
      <div className="ml-auto flex items-center">
        <span className="h-8 w-1.5 border-x border-[#c9c9c9]" />
        <div className="ml-0.5 flex h-[30px] border border-[#b9bcbd]">
          <button type="button" aria-label="Find" className="flex w-[33px] items-center justify-center"><Icon name="binoculars" /></button>
          <button type="button" aria-label="Find options" className="flex w-4 items-center justify-center border-l border-[#b9bcbd]"><Caret /></button>
        </div>
        <span className="ml-0.5 h-8 w-px bg-[#c9c9c9]" />
        <span className="ml-1 w-[115px] pt-0.5">1 selected</span>
        <div className="relative mr-[21px] h-7 w-[217px]">
          <select aria-label="Selection filter" defaultValue="Geometry" className="size-full appearance-none border border-[#a9adaf] bg-[#f7f7f7] px-2 pt-0.5 outline-none">
            <option>Geometry</option>
          </select>
          <span className="pointer-events-none absolute inset-y-0 right-0 flex w-5 items-center justify-center border border-[#a9adaf]">
            <Caret />
          </span>
        </div>
      </div>
    </footer>
  );
}

export default function App() {
  return (
    <div className="flex h-screen flex-col overflow-hidden bg-white font-['Open_Sans',sans-serif] text-sm text-[#454545]">
      <TitleBar />
      <TabBar />
      <Ribbon />
      <div className="flex min-h-0 flex-1">
        <ModelTree />
        <div className="w-[7px] shrink-0 bg-[#e6ebec]" />
        <Viewport />
      </div>
      <StatusBar />
    </div>
  );
}
